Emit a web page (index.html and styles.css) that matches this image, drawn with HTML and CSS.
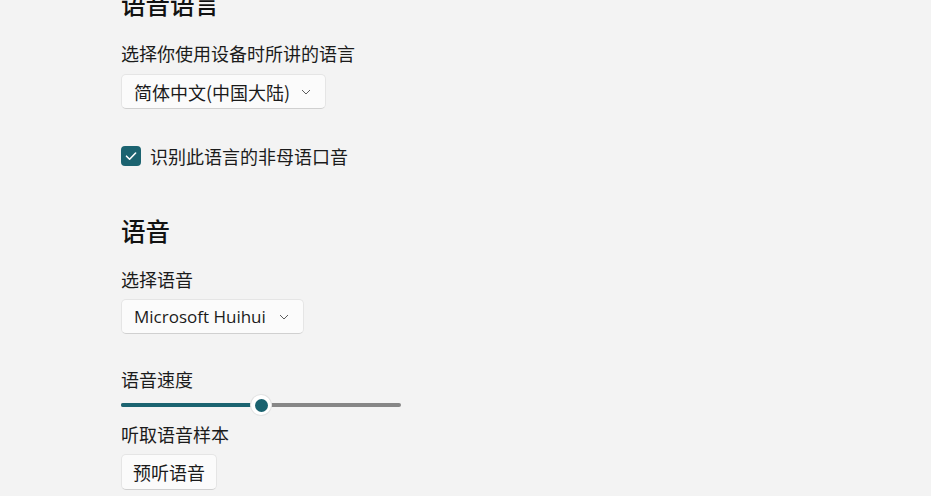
FILE: index.html
```html
<!DOCTYPE html>
<html lang="zh-CN">
<head>
<meta charset="utf-8">
<link rel="stylesheet" href="styles.css">
</head>
<body>
<main class="page">
  <h2 class="heading heading-first">语音语言</h2>
  <div class="label label-first">选择你使用设备时所讲的语言</div>
  <button class="combo combo-lang"><span class="combo-text">简体中文(中国大陆)</span><svg class="chev" viewBox="0 0 10 6" width="10" height="6"><path d="M1 1 L5 5 L9 1" fill="none" stroke="#5c5c5c" stroke-width="1"/></svg></button>
  <label class="check-row">
    <span class="check"><svg viewBox="0 0 20 20" width="20" height="20"><path d="M5.5 10.2 L8.6 13.2 L14.6 7" fill="none" stroke="#ffffff" stroke-width="1.6" stroke-linecap="round" stroke-linejoin="round"/></svg></span>
    <span class="check-text">识别此语言的非母语口音</span>
  </label>

  <h2 class="heading heading-second">语音</h2>
  <div class="label label-voice">选择语音</div>
  <button class="combo combo-voice"><span class="combo-text latin">Microsoft Huihui</span><svg class="chev" viewBox="0 0 10 6" width="10" height="6"><path d="M1 1 L5 5 L9 1" fill="none" stroke="#5c5c5c" stroke-width="1"/></svg></button>

  <div class="label label-speed">语音速度</div>
  <div class="slider">
    <div class="rail"><div class="fill" style="width: 140px"></div></div>
    <div class="thumb" style="left: 140px"></div>
  </div>
  <div class="label label-sample">听取语音样本</div>
  <button class="btn">预听语音</button>
</main>
</body>
</html>
```

FILE: styles.css
```css
html, body {
  margin: 0;
  padding: 0;
  background: #f3f3f3;
  overflow: hidden;
}

body {
  font-family: "Noto Sans CJK SC", "Noto Sans", sans-serif;
  color: #1b1b1b;
  width: 931px;
  height: 496px;
}

.page {
  display: flex;
  flex-direction: column;
  align-items: flex-start;
  padding-left: 121px;
  margin-top: -10px;
}

.heading {
  margin: 0;
  font-size: 24.5px;
  line-height: 28px;
  font-weight: 500;
  color: #111111;
}

.label {
  font-size: 18px;
  line-height: 20px;
  white-space: nowrap;
}

.label-first { margin-top: 25px; }
.heading-second { margin-top: 51px; }
.label-voice { margin-top: 24px; }
.label-speed { margin-top: 35px; }
.label-sample { margin-top: 9px; }

.combo {
  display: flex;
  align-items: center;
  box-sizing: border-box;
  height: 35px;
  padding: 0 14px 0 12px;
  margin: 10px 0 0 0;
  background: #fbfbfb;
  border: 1px solid #e5e5e5;
  border-bottom-color: #d0d0d0;
  border-radius: 5px;
  font-family: inherit;
  font-size: 18px;
  color: #1b1b1b;
  line-height: 20px;
  text-align: left;
}

.combo-text {
  white-space: nowrap;
}

.combo-lang { width: 205px; margin-top: 11px; }
.combo-voice { width: 183px; }

.combo .latin {
  font-family: "Open Sans", "Noto Sans", sans-serif;
  font-size: 17px;
}

.chev {
  margin-left: auto;
  flex: none;
}

.check-row {
  display: flex;
  align-items: center;
  gap: 9px;
  margin-top: 37px;
  height: 20px;
}

.check {
  width: 20px;
  height: 20px;
  border-radius: 4px;
  background: #1b6370;
  display: flex;
}

.check-text {
  font-size: 18px;
  line-height: 20px;
  white-space: nowrap;
}

.slider {
  position: relative;
  width: 280px;
  height: 20px;
  margin-top: 6px;
  display: flex;
  align-items: center;
}

.rail {
  width: 100%;
  height: 4px;
  border-radius: 2px;
  background: #868686;
  display: flex;
}

.fill {
  height: 4px;
  border-radius: 2px;
  background: #1b6370;
}

.thumb {
  position: absolute;
  top: 0;
  width: 20px;
  height: 20px;
  margin-left: -10px;
  border-radius: 50%;
  background: #ffffff;
  box-shadow: 0 0 0 1px #e3e3e3;
}

.thumb::after {
  content: "";
  position: absolute;
  left: 3.5px;
  top: 3.5px;
  width: 13px;
  height: 13px;
  border-radius: 50%;
  background: #1b6370;
}

.btn {
  box-sizing: border-box;
  margin-top: 10px;
  height: 36px;
  width: 96px;
  padding: 0;
  background: #fbfbfb;
  border: 1px solid #e5e5e5;
  border-bottom-color: #d0d0d0;
  border-radius: 5px;
  font-family: inherit;
  font-size: 18px;
  line-height: 20px;
  color: #1b1b1b;
  white-space: nowrap;
}
```
